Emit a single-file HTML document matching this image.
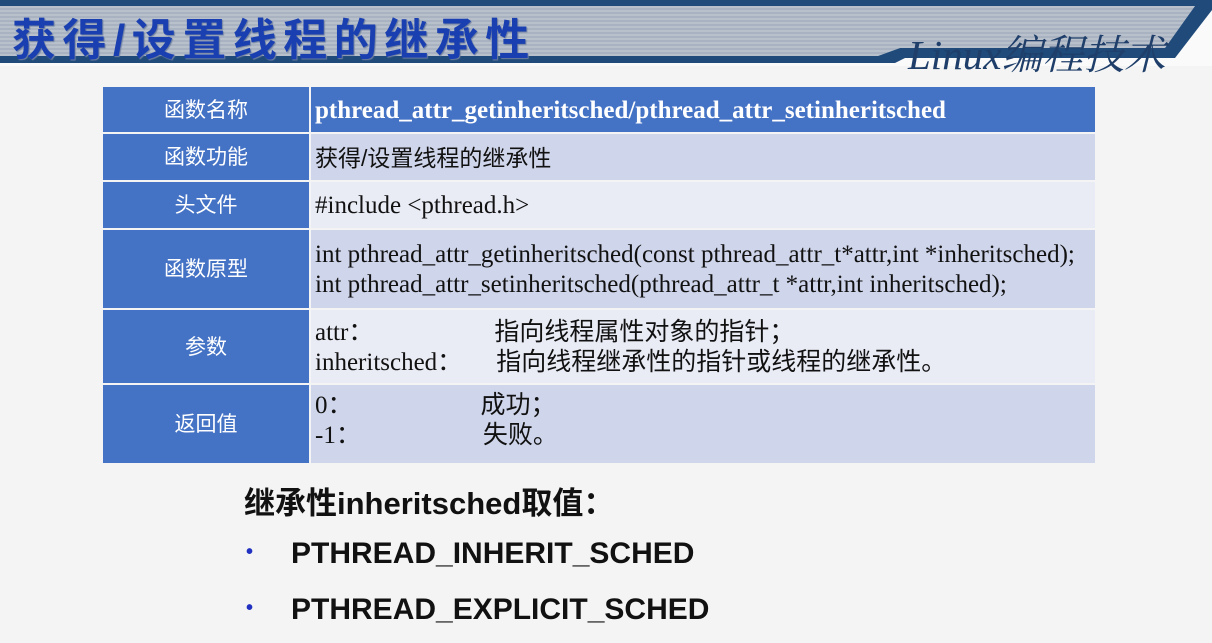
<!DOCTYPE html>
<html><head><meta charset="utf-8"><style>
body{margin:0;width:1212px;height:643px;overflow:hidden;background:#f4f4f4;font-family:"Liberation Sans","Noto Sans CJK SC",sans-serif;position:relative}
.t{position:absolute;left:12px;top:4px;font-size:44px;font-weight:bold;color:#1a3fb0;letter-spacing:6.5px;font-family:"Liberation Sans","Noto Sans CJK SC",sans-serif;text-shadow:1px 1px 1px #7080a0}
.l{position:absolute;left:908px;top:22px;font-size:41px;color:#1f3f6a;font-style:italic;font-family:"Liberation Serif","Noto Serif CJK SC",serif}
table{position:absolute;left:101px;top:85px;border-collapse:collapse;width:996px}
td{border:2px solid #f4f4f4;padding:2px 4px 0;font-family:"Liberation Serif","Noto Sans CJK SC",serif;font-size:25px;color:#111;line-height:30px}
td.h{background:#4472c4;color:#fff;text-align:center;width:198px;font-family:"Liberation Sans","Noto Sans CJK SC",sans-serif;font-size:21px}
tr.ra td{background:#cfd5ea}
tr.rb td{background:#e9ebf5}
tr.top td{background:#4472c4;color:#fff;font-weight:bold}
tr td.h{background:#4472c4}
.s{position:absolute;left:244px;top:478px;font-size:31px;font-weight:bold;color:#111;font-family:"Liberation Sans","Noto Sans CJK SC",sans-serif}
.bl{position:absolute;left:246px;font-size:30px;font-weight:bold;color:#111;font-family:"Liberation Sans",sans-serif}
.dot{color:#2030c0;font-size:20px;margin-right:38px;vertical-align:5px}
.g{display:inline-block}
</style></head><body>
<svg width="1212" height="70" style="position:absolute;left:0;top:0">
<defs><pattern id="p" width="4" height="4" patternUnits="userSpaceOnUse"><rect width="4" height="4" fill="#b8c0cc"/><rect width="4" height="2" fill="#a8b2c0"/></pattern></defs>
<rect x="0" y="0" width="1212" height="66" fill="#fafafa"/>
<polygon points="0,0 1212,0 1212,6 0,6" fill="#1f4a7a"/>
<polygon points="0,6 1195,6 1165,48 900,48 878,56 0,56" fill="url(#p)"/>
<polygon points="0,56 878,56 900,48 1165,48 1195,6 1212,6 1212,10 1175,58 905,58 895,63 0,63" fill="#1f4a7a"/>
</svg>
<div class="t">获得/设置线程的继承性</div>
<div class="l">Linux编程技术</div>
<table>
<tr class="top" style="height:47px"><td class="h" style="font-weight:normal">函数名称</td><td>pthread_attr_getinheritsched/pthread_attr_setinheritsched</td></tr>
<tr class="ra" style="height:48px"><td class="h">函数功能</td><td style="font-family:'Liberation Sans','Noto Sans CJK SC',sans-serif;font-size:23px">获得/设置线程的继承性</td></tr>
<tr class="rb" style="height:48px"><td class="h">头文件</td><td>#include &lt;pthread.h&gt;</td></tr>
<tr class="ra" style="height:80px"><td class="h">函数原型</td><td>int pthread_attr_getinheritsched(const pthread_attr_t*attr,int *inheritsched);<br>int pthread_attr_setinheritsched(pthread_attr_t *attr,int inheritsched);</td></tr>
<tr class="rb" style="height:75px"><td class="h">参数</td><td>attr：<span class="g" style="margin-left:121px">指向线程属性对象的指针；</span><br>inheritsched：<span class="g" style="margin-left:34px">指向线程继承性的指针或线程的继承性。</span></td></tr>
<tr class="ra" style="height:80px"><td class="h">返回值</td><td style="vertical-align:top;padding-top:6px">0：<span class="g" style="margin-left:128px">成功；</span><br>-1：<span class="g" style="margin-left:122px">失败。</span></td></tr>
</table>
<div class="s">继承性inheritsched取值：</div>
<div class="bl" style="top:537px"><span class="dot">•</span>PTHREAD_INHERIT_SCHED</div>
<div class="bl" style="top:593px"><span class="dot">•</span>PTHREAD_EXPLICIT_SCHED</div>
</body></html>
